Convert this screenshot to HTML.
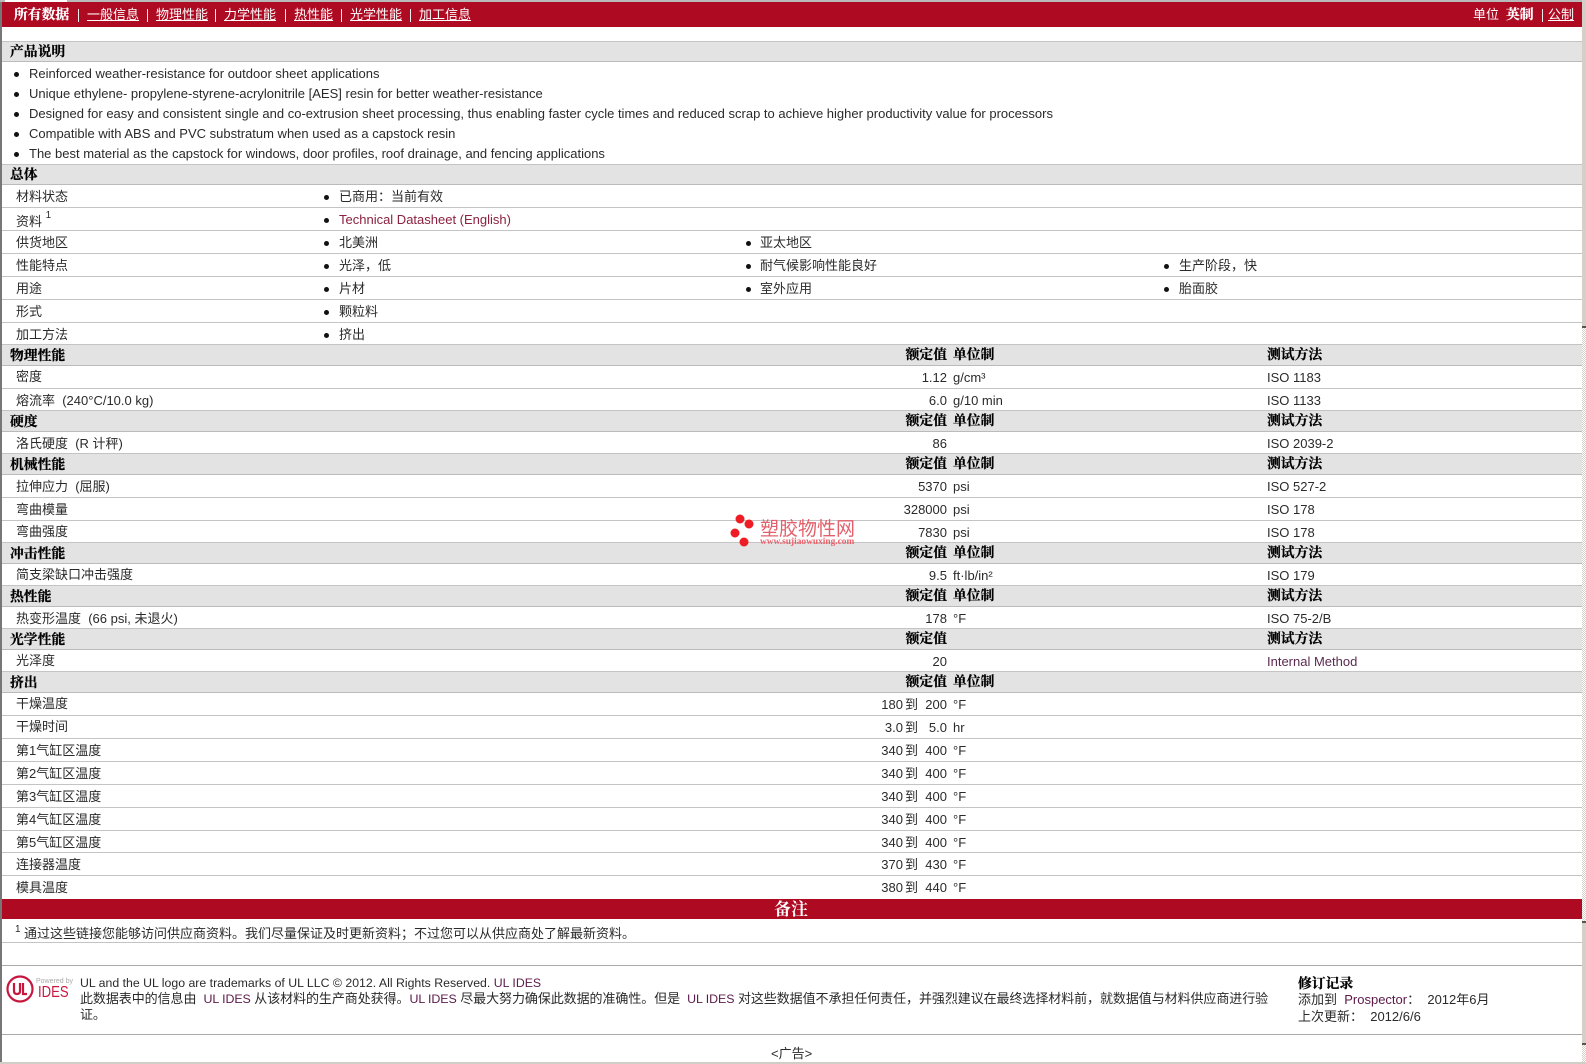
<!DOCTYPE html>
<html lang="zh"><head><meta charset="utf-8"><title>产品数据</title>
<style>
html,body{margin:0;padding:0;background:#fff;width:1586px;height:1064px;overflow:hidden}
body{position:relative;font:13px/15px "Liberation Sans","WenQuanYi Zen Hei","Noto Sans CJK SC",sans-serif;color:#2a2a2a}
div,span,b,a{position:absolute;white-space:nowrap}
b{font-family:"Liberation Sans","Noto Serif CJK SC",serif;font-weight:700;font-size:13.8px;color:#000;-webkit-text-stroke:.25px #000}
a{text-decoration:underline;color:#fff}
.g,.r{left:2px;width:1580px;box-sizing:border-box}
.g{background:#e3e3e3;border-bottom:1px solid #bbb;line-height:20px}
.r{border-bottom:1px solid #c4c4c4;line-height:24px}
.g b{top:0}
.g>b:first-child{left:8px;top:1px}
.l{left:14px}.c1{left:337px}.c2{left:758px}.c3{left:1177px}
.d{width:5px;height:5px;border-radius:50%;background:#111;top:10px}
.d1{left:322px}.d2{left:744px}.d3{left:1162px}
.v{right:635px}.u{left:951px}.t{left:1265px}
.vh{right:635px}.uh{left:951px}.th{left:1265px}
.x{right:679px}.y{right:664px}
.li{left:29px;line-height:20px}
.dl{left:14px;width:5px;height:5px;border-radius:50%;background:#111}
.m{color:#8b2040}
.p{color:#5b1a4a;position:static}
.q{color:#5b1a4a;position:static;font-size:12.4px}
.n{top:5px;color:#fff;line-height:15px}
b.n{color:#fff;-webkit-text-stroke:.25px #fff}
.s{top:7px;width:1px;height:13px;background:#eee}
</style></head><body>
<div style="left:0;top:0;width:1582px;height:2px;background:#b9b9b9"></div>
<div style="left:5px;top:0;width:62px;height:2px;background:#fff"></div>
<div style="left:0;top:2px;width:2px;height:1062px;background:#777"></div>
<div style="left:1582px;top:0;width:4px;height:327px;background:#d4d0c8"></div>
<div style="left:1582px;top:327px;width:4px;height:595px;background:repeating-conic-gradient(#d4d0c8 0 25%,#fff 0 50%) 0 0/2px 2px"></div>
<div style="left:1582px;top:326px;width:4px;height:2px;background:#555"></div>
<div style="left:1582px;top:922px;width:4px;height:122px;background:#d4d0c8"></div>
<div style="left:1582px;top:921px;width:4px;height:2px;background:#555"></div>
<div style="left:1582px;top:1044px;width:4px;height:20px;background:repeating-conic-gradient(#d4d0c8 0 25%,#fff 0 50%) 0 0/2px 2px"></div>
<div style="left:1582px;top:1043px;width:4px;height:2px;background:#555"></div>
<div style="left:0;top:1062px;width:1586px;height:2px;background:#cfcfc8"></div>

<div style="left:2px;top:2px;width:1580px;height:25px;background:#ae0a22">
<b class="n" style="left:12px">所有数据</b><span class="s" style="left:76px"></span>
<a class="n" style="left:85px">一般信息</a><span class="s" style="left:145px"></span>
<a class="n" style="left:154px">物理性能</a><span class="s" style="left:213px"></span>
<a class="n" style="left:222px">力学性能</a><span class="s" style="left:283px"></span>
<a class="n" style="left:292px">热性能</a><span class="s" style="left:339px"></span>
<a class="n" style="left:348px">光学性能</a><span class="s" style="left:408px"></span>
<a class="n" style="left:417px">加工信息</a>
<span class="n" style="left:1471px">单位</span><b class="n" style="left:1504px">英制</b><span class="s" style="left:1540px"></span><a class="n" style="left:1546px">公制</a>
</div>

<div class="g" style="top:41px;height:21px;border-top:1px solid #c4c4c4"><b style="top:0">产品说明</b></div>
<span class="dl" style="top:72px"></span><span class="li" style="top:64px">Reinforced weather-resistance for outdoor sheet applications</span>
<span class="dl" style="top:92px"></span><span class="li" style="top:84px">Unique ethylene- propylene-styrene-acrylonitrile [AES] resin for better weather-resistance</span>
<span class="dl" style="top:112px"></span><span class="li" style="top:104px">Designed for easy and consistent single and co-extrusion sheet processing, thus enabling faster cycle times and reduced scrap to achieve higher productivity value for processors</span>
<span class="dl" style="top:132px"></span><span class="li" style="top:124px">Compatible with ABS and PVC substratum when used as a capstock resin</span>
<span class="dl" style="top:152px"></span><span class="li" style="top:144px">The best material as the capstock for windows, door profiles, roof drainage, and fencing applications</span>

<div class="g" style="top:164px;height:21px;border-top:1px solid #c4c4c4"><b style="top:0">总体</b></div>
<div class="r" style="top:185px;height:23px"><span class="l">材料状态</span><span class="d d1"></span><span class="c1">已商用：当前有效</span></div>
<div class="r" style="top:208px;height:23px"><span class="l" style="top:2px">资料 <sup style="font-size:10px;line-height:0;position:relative;top:-3px">1</sup></span><span class="d d1"></span><span class="c1 m">Technical Datasheet (English)</span></div>
<div class="r" style="top:231px;height:23px"><span class="l">供货地区</span><span class="d d1"></span><span class="c1">北美洲</span><span class="d d2"></span><span class="c2">亚太地区</span></div>
<div class="r" style="top:254px;height:23px"><span class="l">性能特点</span><span class="d d1"></span><span class="c1">光泽，低</span><span class="d d2"></span><span class="c2">耐气候影响性能良好</span><span class="d d3"></span><span class="c3">生产阶段，快</span></div>
<div class="r" style="top:277px;height:23px"><span class="l">用途</span><span class="d d1"></span><span class="c1">片材</span><span class="d d2"></span><span class="c2">室外应用</span><span class="d d3"></span><span class="c3">胎面胶</span></div>
<div class="r" style="top:300px;height:23px"><span class="l">形式</span><span class="d d1"></span><span class="c1">颗粒料</span></div>
<div class="r" style="top:323px;height:22px"><span class="l">加工方法</span><span class="d d1"></span><span class="c1">挤出</span></div>

<div class="g" style="top:345px;height:21px"><b>物理性能</b><b class="vh">额定值</b><b class="uh">单位制</b><b class="th">测试方法</b></div>
<div class="r" style="top:366px;height:23px"><span class="l" style="top:-1px">密度</span><span class="v">1.12</span><span class="u">g/cm³</span><span class="t">ISO 1183</span></div>
<div class="r" style="top:389px;height:22px"><span class="l">熔流率&nbsp; (240°C/10.0 kg)</span><span class="v">6.0</span><span class="u">g/10 min</span><span class="t">ISO 1133</span></div>
<div class="g" style="top:411px;height:21px"><b>硬度</b><b class="vh">额定值</b><b class="uh">单位制</b><b class="th">测试方法</b></div>
<div class="r" style="top:432px;height:22px"><span class="l">洛氏硬度&nbsp; (R 计秤)</span><span class="v">86</span><span class="t">ISO 2039-2</span></div>
<div class="g" style="top:454px;height:21px"><b>机械性能</b><b class="vh">额定值</b><b class="uh">单位制</b><b class="th">测试方法</b></div>
<div class="r" style="top:475px;height:23px"><span class="l">拉伸应力&nbsp; (屈服)</span><span class="v">5370</span><span class="u">psi</span><span class="t">ISO 527-2</span></div>
<div class="r" style="top:498px;height:23px"><span class="l">弯曲模量</span><span class="v">328000</span><span class="u">psi</span><span class="t">ISO 178</span></div>
<div class="r" style="top:521px;height:22px"><span class="l" style="top:-1px">弯曲强度</span><span class="v">7830</span><span class="u">psi</span><span class="t">ISO 178</span></div>
<div class="g" style="top:543px;height:21px"><b>冲击性能</b><b class="vh">额定值</b><b class="uh">单位制</b><b class="th">测试方法</b></div>
<div class="r" style="top:564px;height:22px"><span class="l" style="top:-1px">简支梁缺口冲击强度</span><span class="v">9.5</span><span class="u">ft·lb/in²</span><span class="t">ISO 179</span></div>
<div class="g" style="top:586px;height:21px"><b>热性能</b><b class="vh">额定值</b><b class="uh">单位制</b><b class="th">测试方法</b></div>
<div class="r" style="top:607px;height:22px"><span class="l">热变形温度&nbsp; (66 psi, 未退火)</span><span class="v">178</span><span class="u">°F</span><span class="t">ISO 75-2/B</span></div>
<div class="g" style="top:629px;height:21px"><b>光学性能</b><b class="vh">额定值</b><b class="th">测试方法</b></div>
<div class="r" style="top:650px;height:22px"><span class="l" style="top:-1px">光泽度</span><span class="v">20</span><span class="t" style="color:#5b2a50">Internal Method</span></div>
<div class="g" style="top:672px;height:21px"><b>挤出</b><b class="vh">额定值</b><b class="uh">单位制</b></div>
<div class="r" style="top:693px;height:23px"><span class="l" style="top:-1px">干燥温度</span><span class="x">180</span><span class="y">到</span><span class="v">200</span><span class="u">°F</span></div>
<div class="r" style="top:716px;height:23px"><span class="l" style="top:-1px">干燥时间</span><span class="x">3.0</span><span class="y">到</span><span class="v">5.0</span><span class="u">hr</span></div>
<div class="r" style="top:739px;height:23px"><span class="l">第1气缸区温度</span><span class="x">340</span><span class="y">到</span><span class="v">400</span><span class="u">°F</span></div>
<div class="r" style="top:762px;height:23px"><span class="l">第2气缸区温度</span><span class="x">340</span><span class="y">到</span><span class="v">400</span><span class="u">°F</span></div>
<div class="r" style="top:785px;height:23px"><span class="l">第3气缸区温度</span><span class="x">340</span><span class="y">到</span><span class="v">400</span><span class="u">°F</span></div>
<div class="r" style="top:808px;height:23px"><span class="l">第4气缸区温度</span><span class="x">340</span><span class="y">到</span><span class="v">400</span><span class="u">°F</span></div>
<div class="r" style="top:831px;height:22px"><span class="l">第5气缸区温度</span><span class="x">340</span><span class="y">到</span><span class="v">400</span><span class="u">°F</span></div>
<div class="r" style="top:853px;height:23px"><span class="l">连接器温度</span><span class="x">370</span><span class="y">到</span><span class="v">430</span><span class="u">°F</span></div>
<div class="r" style="top:876px;height:23px;border-bottom:0"><span class="l">模具温度</span><span class="x">380</span><span class="y">到</span><span class="v">440</span><span class="u">°F</span></div>

<div style="left:2px;top:899px;width:1580px;height:20px;background:#ae0a22"><b style="left:772px;top:1px;font-size:17px;line-height:20px;color:#fff;-webkit-text-stroke:0">备注</b></div>
<div class="r" style="top:919px;height:24px;line-height:30px"><span style="left:13px;top:-4px;font-size:10px">1</span><span style="left:22px">通过这些链接您能够访问供应商资料。我们尽量保证及时更新资料；不过您可以从供应商处了解最新资料。</span></div>
<div style="left:2px;top:965px;width:1580px;height:1px;background:#aaa"></div>

<svg style="position:absolute;left:6px;top:975px" width="30" height="28" viewBox="0 0 30 28"><circle cx="14" cy="14" r="12.5" fill="none" stroke="#c8173f" stroke-width="2.2"/><path d="M8 8v8q0 3 3 3t3-3V8M17 8v11h4" fill="none" stroke="#c8173f" stroke-width="2.2"/></svg>
<span style="left:36px;top:977px;font-size:7px;line-height:9px;color:#aaa">Powered by</span>
<span style="left:38px;top:984px;font-size:16px;line-height:18px;color:#c8173f;transform:scaleX(.82);transform-origin:0 0">IDES</span>

<span style="left:80px;top:976px;font-size:12.3px">UL and the UL logo are trademarks of UL LLC © 2012. All Rights Reserved. <span class="p">UL IDES</span></span>
<div style="left:80px;top:991px;width:1200px;line-height:15px;letter-spacing:-.07px">此数据表中的信息由&nbsp; <span class="q">UL IDES</span> 从该材料的生产商处获得。<span class="q">UL IDES</span> 尽最大努力确保此数据的准确性。但是&nbsp; <span class="q">UL IDES</span> 对这些数据值不承担任何责任，并强烈建议在最终选择材料前，就数据值与材料供应商进行验<br>证。</div>
<b style="left:1298px;top:976px">修订记录</b>
<span style="left:1298px;top:992px">添加到&nbsp; <span class="p">Prospector</span>：&nbsp; 2012年6月</span>
<span style="left:1298px;top:1009px">上次更新：&nbsp; 2012/6/6</span>
<div style="left:2px;top:1034px;width:1580px;height:1px;background:#aaa"></div>
<span style="left:771px;top:1046px">&lt;广告&gt;</span>

<svg style="position:absolute;left:728px;top:512px" width="30" height="38"><circle cx="12" cy="7" r="4.5" fill="#ee1c25"/><circle cx="21" cy="12" r="4.5" fill="#ee1c25"/><circle cx="7" cy="21" r="4.5" fill="#ee1c25"/><circle cx="16" cy="30" r="4.5" fill="#ee1c25"/></svg>
<span style="left:760px;top:519px;font-size:19px;line-height:22px;color:#e2606c">塑胶物性网</span>
<span style="left:760px;top:535.5px;font:700 9.4px/12px 'Liberation Serif',serif;color:#e9606a">www.sujiaowuxing.com</span>
</body></html>
